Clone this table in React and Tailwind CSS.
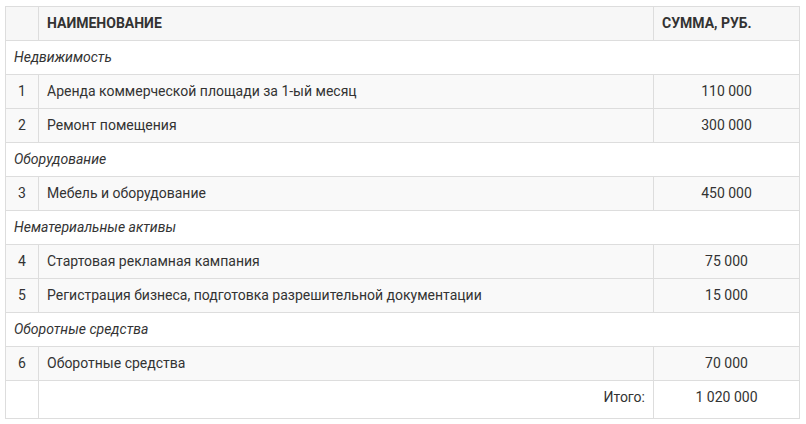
const sections = [
  {
    title: "Недвижимость",
    items: [
      { n: 1, name: "Аренда коммерческой площади за 1-ый месяц", sum: "110 000" },
      { n: 2, name: "Ремонт помещения", sum: "300 000" },
    ],
  },
  {
    title: "Оборудование",
    items: [{ n: 3, name: "Мебель и оборудование", sum: "450 000" }],
  },
  {
    title: "Нематериальные активы",
    items: [
      { n: 4, name: "Стартовая рекламная кампания", sum: "75 000" },
      { n: 5, name: "Регистрация бизнеса, подготовка разрешительной документации", sum: "15 000" },
    ],
  },
  {
    title: "Оборотные средства",
    items: [{ n: 6, name: "Оборотные средства", sum: "70 000" }],
  },
];

const cell = "border border-[#dddddd] px-[8px] py-[6px] leading-[21px]";

export default function App() {
  return (
    <div className="min-h-screen bg-white pl-[5px] pt-[6px] font-['Roboto',sans-serif] text-[14px] text-[#333333]">
      <table className="w-[795px] table-fixed border-collapse">
        <colgroup>
          <col className="w-[33px]" />
          <col />
          <col className="w-[146px]" />
        </colgroup>
        <thead>
          <tr className="bg-[#f7f7f7]">
            <th className={cell}></th>
            <th className={`${cell} text-left font-bold`}>НАИМЕНОВАНИЕ</th>
            <th className={`${cell} text-left font-bold`}>СУММА, РУБ.</th>
          </tr>
        </thead>
        <tbody>
          {sections.map((s) => (
            <>
              <tr key={s.title}>
                <td colSpan={3} className={`${cell} italic`}>
                  {s.title}
                </td>
              </tr>
              {s.items.map((it) => (
                <tr key={it.n} className="bg-[#f9f9f9]">
                  <td className={`${cell} text-center`}>{it.n}</td>
                  <td className={cell}>{it.name}</td>
                  <td className={`${cell} text-center`}>{it.sum}</td>
                </tr>
              ))}
            </>
          ))}
          <tr>
            <td className="border border-[#dddddd] px-[8px] pt-[6px] pb-[10px] leading-[21px]"></td>
            <td className="border border-[#dddddd] px-[8px] pt-[6px] pb-[10px] leading-[21px] text-right">Итого:</td>
            <td className="border border-[#dddddd] px-[8px] pt-[6px] pb-[10px] leading-[21px] text-center">1 020 000</td>
          </tr>
        </tbody>
      </table>
    </div>
  );
}
